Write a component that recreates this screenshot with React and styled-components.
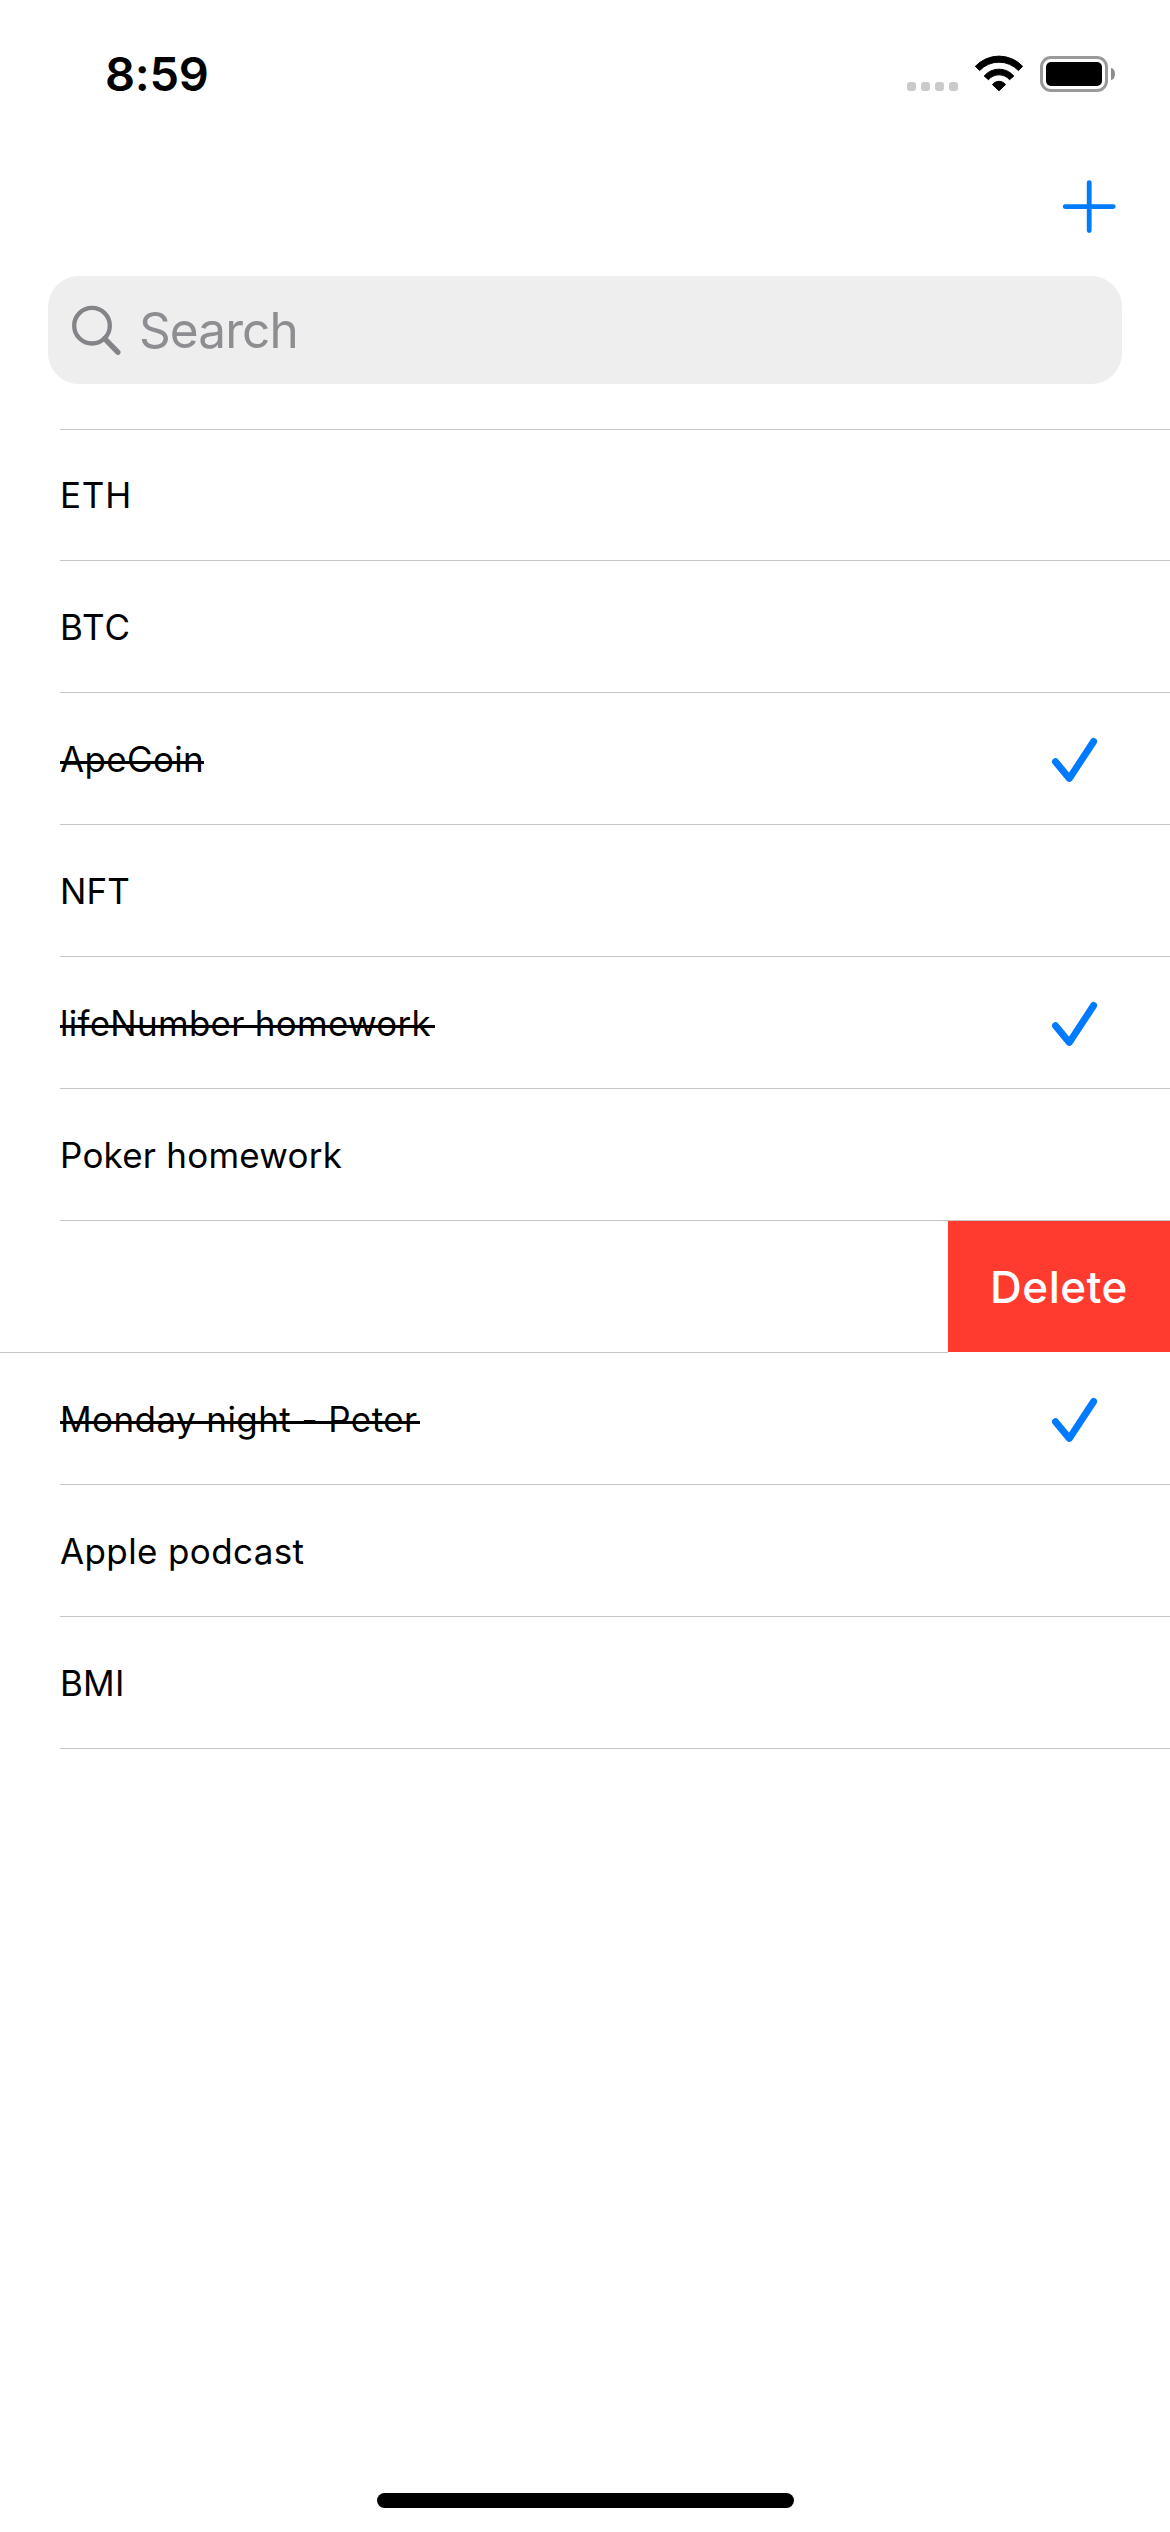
import React from "react";
import styled, { createGlobalStyle } from "styled-components";

const GlobalStyle = createGlobalStyle`
  * { box-sizing: border-box; }
  body {
    margin: 0;
    background: #ffffff;
    font-family: Inter, "Liberation Sans", sans-serif;
    color: #000000;
  }
`;

const Screen = styled.div`
  display: flex;
  flex-direction: column;
  width: 1170px;
  height: 2532px;
  overflow: hidden;
  background: #ffffff;
`;

const StatusBar = styled.header`
  display: flex;
  justify-content: space-between;
  height: 141px;
  padding: 45px 55px 0 105px;
`;

const Clock = styled.time`
  height: 58px;
  font-size: 47px;
  font-weight: 600;
  line-height: 58px;
  letter-spacing: -0.3px;
`;

const StatusIcons = styled.div`
  display: flex;
  align-items: flex-end;
  height: 47px;
`;

const SignalDots = styled.div`
  display: flex;
  gap: 5px;
  margin: 0 16px 1px 0;
`;

const SignalDot = styled.span`
  width: 9px;
  height: 9px;
  border-radius: 3px;
  background: #cacaca;
`;

const WifiIcon = styled.svg`
  width: 50px;
  height: 37px;
  margin-right: 16px;
`;

const Battery = styled.div`
  display: flex;
  align-items: center;
  gap: 3px;
`;

const BatteryShell = styled.div`
  width: 68px;
  height: 36px;
  padding: 3px;
  border: 3px solid #999999;
  border-radius: 11px;
`;

const BatteryCharge = styled.div`
  height: 100%;
  border-radius: 5px;
  background: #000000;
`;

const BatteryCap = styled.div`
  width: 4px;
  height: 12px;
  border-radius: 0 4px 4px 0 / 0 6px 6px 0;
  background: #8c8c8c;
`;

const NavBar = styled.nav`
  display: flex;
  justify-content: flex-end;
  height: 135px;
  padding: 38px 53px 0 0;
`;

const AddButton = styled.button`
  display: flex;
  align-items: flex-start;
  height: 56px;
  padding: 0;
  border: 0;
  background: none;
`;

const SearchField = styled.label`
  display: flex;
  align-items: center;
  height: 108px;
  margin: 0 48px 45px;
  padding-left: 22px;
  border-radius: 31px;
  background: #eeeeef;
`;

const SearchInput = styled.input`
  flex: 1;
  height: 60px;
  margin: 0 0 0 17px;
  padding: 0;
  border: 0;
  outline: 0;
  background: none;
  font: 400 49.5px/60px Inter, "Liberation Sans", sans-serif;
  letter-spacing: -0.9px;

  &::placeholder {
    color: #8e8e92;
    opacity: 1;
  }
`;

const List = styled.ul`
  margin: 0;
  padding: 0;
  list-style: none;

  &::before {
    content: "";
    display: block;
    height: 1px;
    margin-left: 60px;
    background: #c6c6c8;
  }
`;

const Row = styled.li`
  display: flex;
  height: 132px;
  padding-left: ${(p) => (p.$swiped ? 0 : 60)}px;

  &:first-child {
    height: 131px;
  }
`;

const RowContent = styled.div`
  display: flex;
  flex: 1;
  align-items: center;
  justify-content: space-between;
  padding-right: 72px;
  border-bottom: 1px solid #c6c6c8;
`;

const Title = styled.span`
  position: relative;
  margin-top: 2px;
  padding-right: ${(p) => p.$trail || 0}px;
  font-size: 35px;
  line-height: 43px;
  letter-spacing: ${(p) => p.$tracking || 0}px;
  white-space: nowrap;

  ${Row}:first-child & {
    margin-top: 0;
  }

  &::after {
    content: "";
    display: ${(p) => (p.$done ? "block" : "none")};
    position: absolute;
    left: 0;
    right: 0;
    top: 23px;
    height: 3px;
    background: #000000;
  }
`;

const DeleteButton = styled.button`
  width: 222px;
  height: 131px;
  padding: 0;
  border: 0;
  background: #ff3b30;
  color: #ffffff;
  font: 450 44px/54px Inter, "Liberation Sans", sans-serif;
  letter-spacing: 0.5px;
`;

const HomeArea = styled.footer`
  display: flex;
  justify-content: center;
  margin-top: auto;
  padding: 0 0 24px 1px;
`;

const HomeIndicator = styled.div`
  width: 417px;
  height: 15px;
  border-radius: 8px;
  background: #000000;
`;

const items = [
  { title: "ETH", tracking: 0.8 },
  { title: "BTC", tracking: 1 },
  { title: "ApeCoin", tracking: 0.35, done: true },
  { title: "NFT", tracking: 0.1 },
  { title: "lifeNumber homework", tracking: 0.27, done: true, trail: 4 },
  { title: "Poker homework", tracking: 0.22 },
  { swiped: true },
  { title: "Monday night - Peter", tracking: 0.42, done: true, trail: 2 },
  { title: "Apple podcast", tracking: 0.38 },
  { title: "BMI", tracking: 0.2 },
];

const Wifi = () => (
  <WifiIcon viewBox="0 0 150 111" fill="#000" stroke="#000" strokeWidth="3" strokeLinejoin="round">
    <path d="M4 34A97.6 97.6 0 0 1 146 34L133 46.6A79.5 79.5 0 0 0 17 46.6Z" />
    <path d="M30.4 63.1A58.5 58.5 0 0 1 119.6 63.1L106.6 74.1A41.5 41.5 0 0 0 43.4 74.1Z" />
    <path d="M75 107L55.5 89A24 24 0 0 1 94.5 89Z" />
  </WifiIcon>
);

const Plus = () => (
  <svg width="56" height="56" fill="none" stroke="#007aff" strokeWidth="4.8" strokeLinecap="round">
    <path d="M28.2 3.6V51.6M4.2 27.6H52.2" />
  </svg>
);

const Magnifier = () => (
  <svg width="52" height="52" fill="none" stroke="#848488">
    <circle cx="22" cy="21.7" r="17.8" strokeWidth="4.3" />
    <path d="M34.6 34.6L47.8 48.2" strokeWidth="5.4" strokeLinecap="round" />
  </svg>
);

const Check = () => (
  <svg width="47" height="49" fill="none" stroke="#007aff" strokeWidth="7" strokeLinecap="round" strokeLinejoin="round">
    <path d="M4.5 27.7L18.4 44.4L42.6 7.5" />
  </svg>
);

export default function App() {
  return (
    <Screen>
      <GlobalStyle />
      <StatusBar>
        <Clock>8:59</Clock>
        <StatusIcons>
          <SignalDots>
            <SignalDot />
            <SignalDot />
            <SignalDot />
            <SignalDot />
          </SignalDots>
          <Wifi />
          <Battery>
            <BatteryShell>
              <BatteryCharge />
            </BatteryShell>
            <BatteryCap />
          </Battery>
        </StatusIcons>
      </StatusBar>
      <NavBar>
        <AddButton aria-label="Add">
          <Plus />
        </AddButton>
      </NavBar>
      <SearchField>
        <Magnifier />
        <SearchInput placeholder="Search" />
      </SearchField>
      <List>
        {items.map((item, i) => (
          <Row key={i} $swiped={item.swiped}>
            <RowContent>
              {item.title && (
                <Title $done={item.done} $tracking={item.tracking} $trail={item.trail}>
                  {item.title}
                </Title>
              )}
              {item.done && <Check />}
            </RowContent>
            {item.swiped && <DeleteButton>Delete</DeleteButton>}
          </Row>
        ))}
      </List>
      <HomeArea>
        <HomeIndicator />
      </HomeArea>
    </Screen>
  );
}
